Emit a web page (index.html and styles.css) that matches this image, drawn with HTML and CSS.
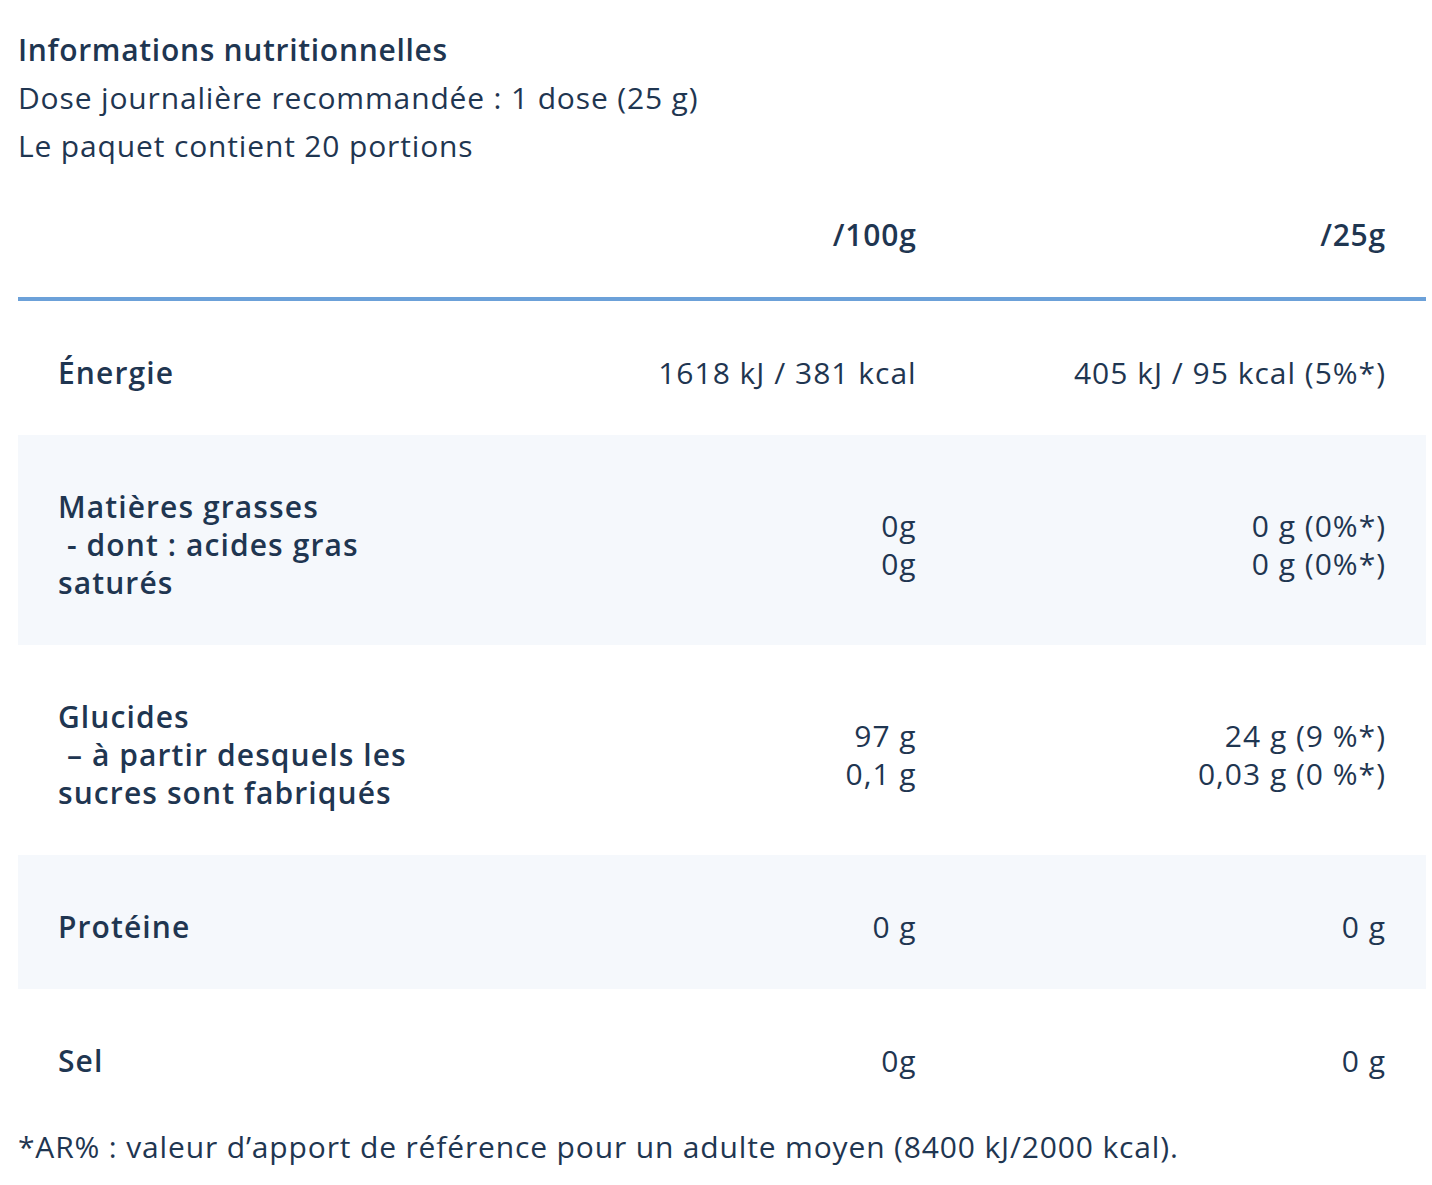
FILE: index.html
```html
<!DOCTYPE html>
<html lang="fr">
<head>
<meta charset="utf-8">
<title>Informations nutritionnelles</title>
<link rel="stylesheet" href="styles.css">
</head>
<body>
<div class="page">
  <div class="intro">
    <h2 class="title">Informations nutritionnelles</h2>
    <p class="line">Dose journalière recommandée : 1 dose (25 g)</p>
    <p class="line">Le paquet contient 20 portions</p>
  </div>
  <table class="nutri">
    <colgroup><col class="c"><col class="c"><col class="c"></colgroup>
    <thead>
      <tr><th></th><th class="num">/100g</th><th class="num">/25g</th></tr>
    </thead>
    <tbody>
      <tr><td class="lbl">Énergie</td><td class="num">1618 kJ / 381 kcal</td><td class="num">405 kJ / 95 kcal (5%*)</td></tr>
      <tr class="alt"><td class="lbl">Matières grasses<br>&nbsp;- dont : acides gras saturés</td><td class="num">0g<br>0g</td><td class="num">0 g (0%*)<br>0 g (0%*)</td></tr>
      <tr><td class="lbl">Glucides<br>&nbsp;– à partir desquels les sucres sont fabriqués</td><td class="num">97 g<br>0,1 g</td><td class="num">24 g (9 %*)<br>0,03 g (0 %*)</td></tr>
      <tr class="alt"><td class="lbl">Protéine</td><td class="num">0 g</td><td class="num">0 g</td></tr>
      <tr><td class="lbl">Sel</td><td class="num">0g</td><td class="num">0 g</td></tr>
    </tbody>
  </table>
  <p class="line foot">*AR% : valeur d’apport de référence pour un adulte moyen (8400 kJ/2000 kcal).</p>
</div>
</body>
</html>
```
FILE: styles.css
```css
html, body { margin: 0; padding: 0; background: #fff; }
body {
  font-family: "Open Sans", "Liberation Sans", sans-serif;
  color: #1f3651;
  font-variant-ligatures: none;
}
.page {
  width: 1408px;
  margin-left: 18px;
  padding-top: 26px;
}
.intro { margin: 0; }
.title {
  margin: 0;
  font-size: 30px;
  line-height: 48px;
  font-weight: 600;
  letter-spacing: 0.7px;
}
.line {
  margin: 0;
  font-size: 30px;
  line-height: 48px;
  font-weight: 400;
  letter-spacing: 0.85px;
}
.nutri {
  width: 100%;
  table-layout: fixed;
  border-collapse: collapse;
  font-size: 30px;
  line-height: 38px;
  letter-spacing: 0.8px;
}
.nutri th {
  padding: 46px 40px 43px;
  font-weight: 600;
  border-bottom: 4px solid #6ca1d9;
}
.nutri td {
  padding: 53px 40px 43px;
  vertical-align: middle;
}
.nutri .num { text-align: right; }
.nutri td.num { font-weight: 400; letter-spacing: 1px; }
.nutri .lbl { font-weight: 600; text-align: left; letter-spacing: 1.1px; }
.nutri tr.alt td { background: #f5f8fc; }
.foot { margin: 0; }
```
